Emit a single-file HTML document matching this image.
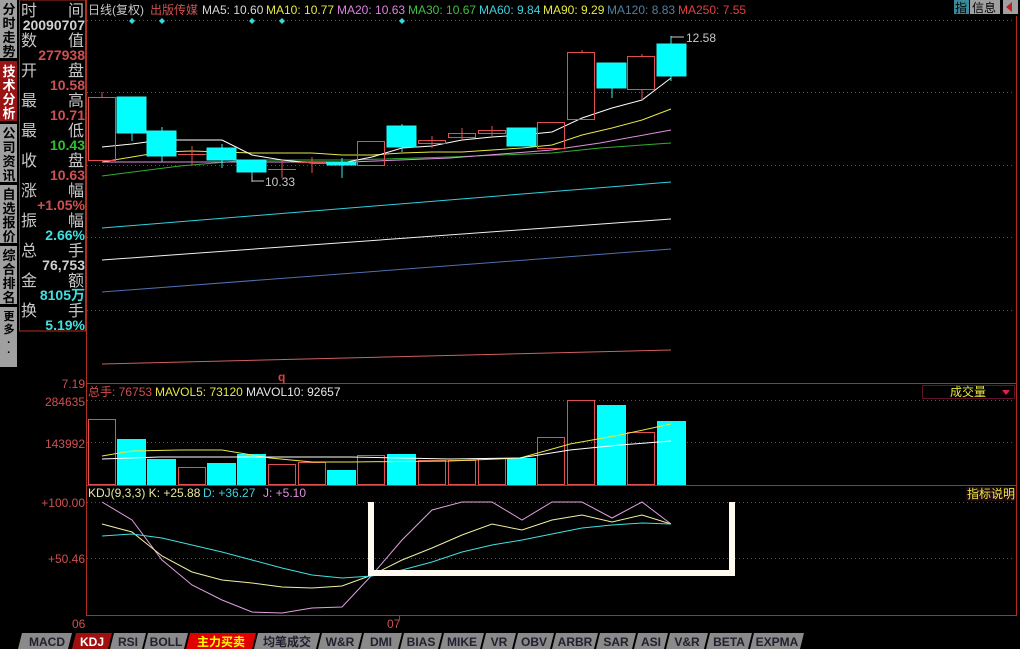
<!DOCTYPE html>
<html><head><meta charset="utf-8"><style>
body{margin:0;background:#000;width:1020px;height:649px;overflow:hidden;font-family:"Liberation Sans","Noto Sans CJK SC",sans-serif}
svg{position:absolute;left:0;top:0}
</style></head><body>
<svg width="1020" height="649" viewBox="0 0 1020 649" font-family="Liberation Sans, Noto Sans CJK SC, sans-serif">
<!-- left tabs -->
<g font-size="13" font-weight="bold" text-anchor="middle">
<rect x="0" y="0" width="17" height="58" fill="#a0a0a0"/>
<text fill="#000"><tspan x="9" y="14">分</tspan><tspan x="9" y="28">时</tspan><tspan x="9" y="42">走</tspan><tspan x="9" y="56">势</tspan></text>
<rect x="0" y="61" width="17" height="60" fill="#9a1414"/>
<text fill="#fff"><tspan x="9" y="76">技</tspan><tspan x="9" y="90">术</tspan><tspan x="9" y="104">分</tspan><tspan x="9" y="118">析</tspan></text>
<rect x="0" y="124" width="17" height="58" fill="#a0a0a0"/>
<text fill="#000"><tspan x="9" y="138">公</tspan><tspan x="9" y="152">司</tspan><tspan x="9" y="166">资</tspan><tspan x="9" y="180">讯</tspan></text>
<rect x="0" y="185" width="17" height="58" fill="#a0a0a0"/>
<text fill="#000"><tspan x="9" y="199">自</tspan><tspan x="9" y="213">选</tspan><tspan x="9" y="227">报</tspan><tspan x="9" y="241">价</tspan></text>
<rect x="0" y="246" width="17" height="58" fill="#a0a0a0"/>
<text fill="#000"><tspan x="9" y="260">综</tspan><tspan x="9" y="274">合</tspan><tspan x="9" y="288">排</tspan><tspan x="9" y="302">名</tspan></text>
<rect x="0" y="307" width="17" height="60" fill="#a0a0a0"/>
<text fill="#000" font-size="11"><tspan x="9" y="320">更</tspan><tspan x="9" y="333">多</tspan><tspan x="9" y="346">·</tspan><tspan x="9" y="356">·</tspan></text>
</g>
<!-- info panel -->
<rect x="19.5" y="0" width="66" height="331" fill="none" stroke="#b03020"/>
<g font-size="15" font-weight="bold">
<g fill="#c8c8c8" font-weight="normal" font-size="16">
<text x="21" y="16">时</text><text x="84" y="16" text-anchor="end">间</text>
<text x="21" y="46">数</text><text x="84" y="46" text-anchor="end">值</text>
<text x="21" y="76">开</text><text x="84" y="76" text-anchor="end">盘</text>
<text x="21" y="106">最</text><text x="84" y="106" text-anchor="end">高</text>
<text x="21" y="136">最</text><text x="84" y="136" text-anchor="end">低</text>
<text x="21" y="166">收</text><text x="84" y="166" text-anchor="end">盘</text>
<text x="21" y="196">涨</text><text x="84" y="196" text-anchor="end">幅</text>
<text x="21" y="226">振</text><text x="84" y="226" text-anchor="end">幅</text>
<text x="21" y="256">总</text><text x="84" y="256" text-anchor="end">手</text>
<text x="21" y="286">金</text><text x="84" y="286" text-anchor="end">额</text>
<text x="21" y="316">换</text><text x="84" y="316" text-anchor="end">手</text>
</g>
<g text-anchor="end" font-size="14">
<text x="85" y="30" fill="#d0d0d0">20090707</text>
<text x="85" y="60" fill="#d05050">277938</text>
<text x="85" y="90" fill="#d05050">10.58</text>
<text x="85" y="120" fill="#d05050">10.71</text>
<text x="85" y="150" fill="#30c030">10.43</text>
<text x="85" y="180" fill="#d05050">10.63</text>
<text x="85" y="210" fill="#d05050">+1.05%</text>
<text x="85" y="240" fill="#40e0e0">2.66%</text>
<text x="85" y="270" fill="#d0d0d0">76,753</text>
<text x="85" y="300" fill="#40e0e0">8105万</text>
<text x="85" y="330" fill="#40e0e0">5.19%</text>
</g></g>
<!-- frame -->
<g stroke="#b03020" fill="none">
<line x1="86.5" y1="0" x2="86.5" y2="616"/>
<line x1="86" y1="383.5" x2="1016" y2="383.5"/>
<line x1="86" y1="485.5" x2="1016" y2="485.5"/>
<line x1="86" y1="615.5" x2="1016" y2="615.5"/>
<line x1="1016.5" y1="16" x2="1016.5" y2="616"/>
</g>
<g stroke="#a03020" stroke-dasharray="1,3">
<line x1="87" y1="20.5" x2="1015" y2="20.5"/>
<line x1="87" y1="92.5" x2="1015" y2="92.5"/>
<line x1="87" y1="165.5" x2="1015" y2="165.5"/>
<line x1="87" y1="237.5" x2="1015" y2="237.5"/>
<line x1="87" y1="310.5" x2="1015" y2="310.5"/>
<line x1="87" y1="400.5" x2="1015" y2="400.5"/>
<line x1="87" y1="442.5" x2="1015" y2="442.5"/>
<line x1="87" y1="502.5" x2="1015" y2="502.5"/>
<line x1="87" y1="558.5" x2="1015" y2="558.5"/>
</g>
<!-- header -->
<g font-size="12">
<text x="88" y="14" fill="#c8c8c8">日线(复权)</text>
<text x="150" y="14" fill="#d05050">出版传媒</text>
<text x="202" y="14" fill="#d8d8d8">MA5: 10.60</text>
<text x="266" y="14" fill="#e8e840">MA10: 10.77</text>
<text x="337" y="14" fill="#e080e0">MA20: 10.63</text>
<text x="408" y="14" fill="#40c040">MA30: 10.67</text>
<text x="479" y="14" fill="#40d0e0">MA60: 9.84</text>
<text x="543" y="14" fill="#e8e840">MA90: 9.29</text>
<text x="607" y="14" fill="#5080a0">MA120: 8.83</text>
<text x="678" y="14" fill="#e04040">MA250: 7.55</text>
</g>
<rect x="954" y="0" width="15" height="14" fill="#3a8a9a"/><text x="955" y="12" font-size="12" fill="#000">指</text>
<rect x="970" y="0" width="30" height="14" fill="#a0a0a0"/><text x="972" y="12" font-size="12" fill="#000">信息</text>
<rect x="1003" y="0" width="15" height="14" fill="#a0a0a0"/><path d="M1006 7 L1012 2 L1012 12 Z" fill="#c02020"/>
<g fill="#30e0e0"><path d="M132 18l3 3-3 3-3-3z"/><path d="M162 18l3 3-3 3-3-3z"/><path d="M252 18l3 3-3 3-3-3z"/><path d="M282 18l3 3-3 3-3-3z"/><path d="M402 18l3 3-3 3-3-3z"/></g>
<!-- MA lines -->
<g fill="none" stroke-width="1">
<polyline stroke="#d06060" points="102,364 671,350"/>
<polyline stroke="#5070b0" points="102,292 671,249"/>
<polyline stroke="#f0f0f0" points="102,260 671,219"/>
<polyline stroke="#30d0e0" points="102,228 671,182"/>
<polyline stroke="#30b030" points="102,176 180,166 250,160 350,160 450,157 552,153 600,148 671,143"/>
<polyline stroke="#e090e0" points="102,162 350,162 450,158 552,150 600,143 671,130"/>
<polyline stroke="#e8e840" points="102,162 132,157 162,152 192,151 222,152 252,153 282,153 312,153 342,155 372,155 402,153 432,152 462,152 492,150 522,148 552,145 582,135 612,128 642,120 671,109"/>
<polyline stroke="#ffffff" points="102,147 132,144 162,140 192,140 222,140 252,155 282,160 312,163 342,163 372,157 402,148 432,146 462,140 492,137 522,135 552,132 582,118 612,108 642,100 671,78"/>
</g>
<!-- candles -->
<g stroke="#e05050" fill="none">
<line x1="102" y1="92" x2="102" y2="97"/><rect x="88.5" y="97.5" width="27" height="63" fill="none"/>
<line x1="192" y1="146" x2="192" y2="165"/><line x1="178" y1="154.5" x2="206" y2="154.5"/>
<line x1="282" y1="160" x2="282" y2="178"/><line x1="268" y1="169.5" x2="296" y2="169.5"/>
<line x1="312" y1="157" x2="312" y2="173"/><line x1="298" y1="162.5" x2="326" y2="162.5"/>
<rect x="357.5" y="141.5" width="27" height="24"/>
<line x1="432" y1="136" x2="432" y2="148"/><rect x="418.5" y="140.5" width="27" height="3"/>
<line x1="462" y1="128" x2="462" y2="140"/><rect x="448.5" y="133.5" width="27" height="4"/>
<line x1="492" y1="126" x2="492" y2="136"/><rect x="478.5" y="130.5" width="27" height="3"/>
<rect x="537.5" y="122.5" width="27" height="26"/>
<line x1="582" y1="50" x2="582" y2="52"/><rect x="567.5" y="52.5" width="27" height="67"/>
<line x1="642" y1="54" x2="642" y2="100"/><rect x="627.5" y="56.5" width="27" height="33" fill="#000"/>
</g>
<g stroke="#30f0f0" fill="#00ffff">
<line x1="132" y1="97" x2="132" y2="141"/><rect x="117" y="97" width="29" height="36"/>
<line x1="162" y1="127" x2="162" y2="162"/><rect x="147" y="131" width="29" height="25"/>
<line x1="222" y1="144" x2="222" y2="168"/><rect x="207" y="148" width="29" height="12"/>
<line x1="252" y1="160" x2="252" y2="182"/><rect x="237" y="160" width="29" height="12"/>
<line x1="342" y1="158" x2="342" y2="178"/><rect x="327" y="162" width="29" height="3"/>
<line x1="402" y1="124" x2="402" y2="152"/><rect x="387" y="126" width="29" height="21"/>
<rect x="507" y="128" width="29" height="18"/>
<line x1="612" y1="63" x2="612" y2="98"/><rect x="597" y="63" width="29" height="25"/>
<line x1="671" y1="36" x2="671" y2="81"/><rect x="657" y="44" width="29" height="32"/>
</g>
<g fill="#c8c8c8" font-size="12"><text x="265" y="186">10.33</text><text x="686" y="42">12.58</text></g>
<g stroke="#c8c8c8" fill="none"><polyline points="252,176 252,181 264,181"/><polyline points="671,38 671,37 684,37"/></g>
<text x="278" y="381" font-size="12" font-weight="bold" fill="#e04040">q</text>
<!-- axis labels -->
<g font-size="12" fill="#d05050" text-anchor="end">
<text x="85" y="388">7.19</text><text x="85" y="406">284635</text><text x="85" y="448">143992</text>
<text x="85" y="507">+100.00</text><text x="85" y="563">+50.46</text>
</g>
<g font-size="12" fill="#d05050"><text x="72" y="628">06</text><text x="387" y="628">07</text></g>
<line x1="399.5" y1="615" x2="399.5" y2="620" stroke="#b03020"/>
<!-- volume -->
<g font-size="12"><text x="88" y="396" fill="#d05050">总手: 76753</text><text x="155" y="396" fill="#e8e840">MAVOL5: 73120</text><text x="246" y="396" fill="#e8e8e8">MAVOL10: 92657</text></g>
<rect x="922.5" y="385.5" width="92" height="13" fill="none" stroke="#601030"/>
<text x="950" y="396" font-size="12" fill="#e8e840">成交量</text><path d="M1002 390h8l-4 5z" fill="#e02050"/>
<g stroke="#e05050" fill="none">
<rect x="88.5" y="419.5" width="27" height="65"/><rect x="178.5" y="467.5" width="27" height="17"/>
<rect x="268.5" y="464.5" width="27" height="20"/><rect x="298.5" y="462.5" width="27" height="22"/>
<rect x="357.5" y="455.5" width="27" height="29"/><rect x="418.5" y="460.5" width="27" height="24"/>
<rect x="448.5" y="460.5" width="27" height="24"/><rect x="478.5" y="458.5" width="27" height="26"/>
<rect x="537.5" y="437.5" width="27" height="47"/><rect x="567.5" y="400.5" width="27" height="84"/>
<rect x="627.5" y="432.5" width="27" height="52"/>
</g>
<g fill="#00ffff">
<rect x="117" y="439" width="29" height="46"/><rect x="147" y="459" width="29" height="26"/>
<rect x="207" y="463" width="29" height="22"/><rect x="237" y="454" width="29" height="31"/>
<rect x="327" y="470" width="29" height="15"/><rect x="387" y="454" width="29" height="31"/>
<rect x="507" y="458" width="29" height="27"/><rect x="597" y="405" width="29" height="80"/>
<rect x="657" y="421" width="29" height="64"/>
</g>
<polyline fill="none" stroke="#e8e840" points="102,456 132,451 180,450 222,450 270,458 312,462 350,462 450,461 520,458 570,444 620,435 671,424"/>
<polyline fill="none" stroke="#fff" points="102,459 160,457 350,457 450,459 520,458 570,450 620,445 671,441"/>
<!-- KDJ -->
<g font-size="12"><text x="88" y="497" fill="#e8e8a0">KDJ(9,3,3) K: +25.88</text><text x="203" y="497" fill="#40d0e0">D: +36.27</text><text x="263" y="497" fill="#e090e0">J: +5.10</text></g>
<rect x="966" y="487" width="49" height="14" fill="#200810"/><text x="967" y="498" font-size="12" fill="#e8e840">指标说明</text>
<g fill="none">
<polyline stroke="#e0a0e0" points="102,502 132,520 162,560 192,585 222,600 252,612 282,613 312,608 342,607 372,575 402,540 432,510 462,502 492,502 522,520 552,502 582,502 612,518 642,502 671,524"/>
<polyline stroke="#f0f0a0" points="102,524 132,532 162,556 192,572 222,580 252,583 282,587 312,588 342,586 372,575 402,560 432,548 462,535 492,524 522,530 552,520 582,515 612,522 642,515 671,524"/>
<polyline stroke="#40e0e0" points="102,536 132,534 162,538 192,545 222,552 252,560 282,568 312,575 342,578 372,576 402,570 432,562 462,552 492,545 522,540 552,534 582,528 612,525 642,523 671,524"/>
<polyline stroke="#fffaf0" stroke-width="6" points="371,502 371,573 732,573 732,502"/>
</g>
<!-- bottom tabs -->
<g font-size="12" font-weight="bold" text-anchor="middle">
<g fill="#8a8a8a">
<path d="M22 633h50l-4 16h-50z"/><path d="M114 633h32l-4 16h-32z"/><path d="M148 633h40l-4 16h-40z"/>
<path d="M258 633h62l-4 16h-62z"/><path d="M322 633h40l-4 16h-40z"/><path d="M364 633h38l-4 16h-38z"/>
<path d="M404 633h38l-4 16h-38z"/><path d="M444 633h40l-4 16h-40z"/><path d="M486 633h30l-4 16h-30z"/>
<path d="M518 633h36l-4 16h-36z"/><path d="M556 633h42l-4 16h-42z"/><path d="M600 633h36l-4 16h-36z"/>
<path d="M638 633h30l-4 16h-30z"/><path d="M670 633h38l-4 16h-38z"/><path d="M710 633h42l-4 16h-42z"/>
<path d="M754 633h50l-4 16h-50z"/>
</g>
<path d="M76 633h36l-4 16h-36z" fill="#a01010"/><path d="M190 633h66l-4 16h-66z" fill="#e00000"/>
<g fill="#202030">
<text x="47" y="646">MACD</text><text x="128" y="646">RSI</text><text x="166" y="646">BOLL</text>
<text x="287" y="646">均笔成交</text><text x="340" y="646">W&amp;R</text><text x="381" y="646">DMI</text>
<text x="421" y="646">BIAS</text><text x="462" y="646">MIKE</text><text x="499" y="646">VR</text>
<text x="534" y="646">OBV</text><text x="575" y="646">ARBR</text><text x="616" y="646">SAR</text>
<text x="651" y="646">ASI</text><text x="687" y="646">V&amp;R</text><text x="729" y="646">BETA</text><text x="777" y="646">EXPMA</text>
</g>
<text x="92" y="646" fill="#fff">KDJ</text><text x="221" y="646" fill="#ffff00">主力买卖</text>
</g>
</svg>
</body></html>
